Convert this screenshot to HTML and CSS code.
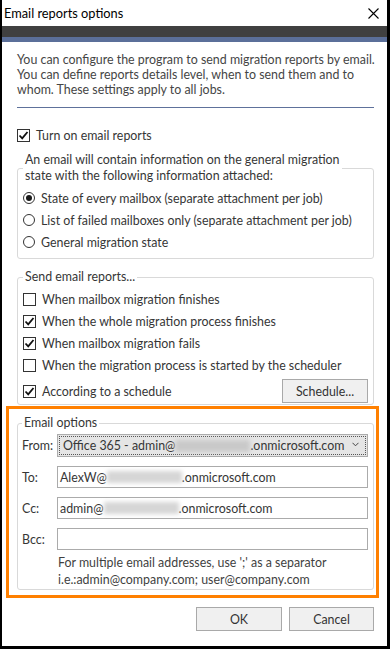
FILE: index.html
```html
<!DOCTYPE html>
<html lang="en">
<head>
    <meta charset="UTF-8" />
    <meta name="viewport" content="width=device-width, initial-scale=1.0"/>
    <title>Email reports options</title>
    <link rel="stylesheet" href="styles.css">
</head>
<body>
    <div class="window">
        <div class="titlebar">
            <span class="title">Email reports options</span>
            <svg class="close-icon" width="11" height="11" viewBox="0 0 11 11">
                <path d="M0.5 0.5 L10.5 10.5 M10.5 0.5 L0.5 10.5" stroke="#000" stroke-width="1.1" fill="none"/>
            </svg>
        </div>
        <div class="menubar"></div>
        <div class="accent"></div>

        <div class="content">
            <p class="intro">You can configure the program to send migration reports by email.<br>You can define reports details level, when to send them and to<br>whom. These settings apply to all jobs.</p>
            <div class="divider"></div>

            <div class="check-row top-check">
                <span class="box checked"><svg width="11" height="11" viewBox="0 0 11 11"><path d="M1.5 5.5 L4.2 8.3 L9.5 2" stroke="#111" stroke-width="1.8" fill="none"/></svg></span>
                Turn on email reports
            </div>

            <!-- Attachment type -->
            <fieldset class="group">
                <legend>An email will contain information on the general migration<br>state with the following information attached:</legend>
                <div class="radio-row"><span class="radio on"></span>State of every mailbox (separate attachment per job)</div>
                <div class="radio-row"><span class="radio"></span>List of failed mailboxes only (separate attachment per job)</div>
                <div class="radio-row"><span class="radio"></span>General migration state</div>
            </fieldset>

            <!-- When to send -->
            <fieldset class="group send-group">
                <legend>Send email reports...</legend>
                <div class="check-row"><span class="box"></span>When mailbox migration finishes</div>
                <div class="check-row"><span class="box checked"><svg width="11" height="11" viewBox="0 0 11 11"><path d="M1.5 5.5 L4.2 8.3 L9.5 2" stroke="#111" stroke-width="1.8" fill="none"/></svg></span>When the whole migration process finishes</div>
                <div class="check-row"><span class="box checked"><svg width="11" height="11" viewBox="0 0 11 11"><path d="M1.5 5.5 L4.2 8.3 L9.5 2" stroke="#111" stroke-width="1.8" fill="none"/></svg></span>When mailbox migration fails</div>
                <div class="check-row"><span class="box"></span>When the migration process is started by the scheduler</div>
                <div class="check-row schedule-row">
                    <span class="box checked"><svg width="11" height="11" viewBox="0 0 11 11"><path d="M1.5 5.5 L4.2 8.3 L9.5 2" stroke="#111" stroke-width="1.8" fill="none"/></svg></span>
                    According to a schedule
                    <button class="btn schedule-btn">Schedule...</button>
                </div>
            </fieldset>

            <!-- Email options (highlighted) -->
            <div class="highlight">
                <fieldset class="group email-group">
                    <legend>Email options</legend>
                    <div class="field">
                        <span class="field-label">From:</span>
                        <div class="select">
                            <div class="select-inner">
                                Office 365 - admin@<span class="redact on-gray"></span>.onmicrosoft.com
                                <svg class="chevron" width="7" height="5" viewBox="0 0 7 5"><path d="M0.5 0.8 L3.5 3.8 L6.5 0.8" stroke="#444" stroke-width="1" fill="none"/></svg>
                            </div>
                        </div>
                    </div>
                    <div class="field">
                        <span class="field-label">To:</span>
                        <div class="input">AlexW@<span class="redact"></span>.onmicrosoft.com</div>
                    </div>
                    <div class="field">
                        <span class="field-label">Cc:</span>
                        <div class="input">admin@<span class="redact"></span>.onmicrosoft.com</div>
                    </div>
                    <div class="field">
                        <span class="field-label">Bcc:</span>
                        <div class="input"></div>
                    </div>
                    <p class="hint">For multiple email addresses, use ';' as a separator<br>i.e.:admin@company.com; user@company.com</p>
                </fieldset>
            </div>

            <div class="actions">
                <button class="btn">OK</button>
                <button class="btn">Cancel</button>
            </div>
        </div>
    </div>
</body>
</html>
```

FILE: styles.css
```css
/* General Reset */
* {
    box-sizing: border-box;
    margin: 0;
    padding: 0;
}

body {
    background-color: #fff;
    font-family: 'Lato', 'Open Sans', sans-serif;
    font-size: 12.4px;
    color: #363636;
}

/* Window frame */
.window {
    width: 390px;
    height: 649px;
    border-left: 2px solid #000;
    border-right: 3px solid #000;
    border-bottom: 3px solid #000;
    background-color: #fff;
}

.titlebar {
    height: 26px;
    display: flex;
    align-items: center;
    justify-content: space-between;
    padding: 0 8px 0 2px;
}

.title {
    color: #000;
    font-size: 12.8px;
}

.close-icon {
    margin-top: 1px;
}

.menubar {
    height: 11px;
    background-color: #404040;
}

.accent {
    height: 5px;
    background-color: #5b6f99;
}

/* Main content */
.content {
    padding: 0 13px 0 15px;
}

.intro {
    margin-top: 10px;
    line-height: 15px;
    color: #454545;
    white-space: nowrap;
}

.divider {
    height: 1px;
    margin-top: 10px;
    background-color: #5e719b;
}

/* Checkbox + radio rows */
.check-row,
.radio-row {
    display: flex;
    align-items: center;
    height: 22px;
    gap: 6px;
    white-space: nowrap;
}

.top-check {
    height: 21px;
    margin-top: 17px;
}

.box {
    width: 13px;
    height: 13px;
    border: 1px solid #333;
    background-color: #fff;
    display: flex;
    align-items: center;
    justify-content: center;
    flex-shrink: 0;
}

.radio {
    width: 12px;
    height: 12px;
    border: 1px solid #333;
    border-radius: 50%;
    display: flex;
    align-items: center;
    justify-content: center;
    flex-shrink: 0;
}

.radio.on::after {
    content: '';
    width: 6px;
    height: 6px;
    border-radius: 50%;
    background-color: #1a1a1a;
}

/* Group boxes */
.group {
    border: 1px solid #d9d9d9;
    border-radius: 3px;
    padding: 3px 5px 5px 5px;
    margin-top: 6px;
}

.group legend {
    padding: 0 2px;
    line-height: 16px;
    white-space: nowrap;
}

.send-group {
    margin-top: 10px;
    padding-bottom: 0;
}

.schedule-row {
    height: 26px;
    margin-top: 2px;
}

.btn {
    font-family: inherit;
    font-size: 12.4px;
    color: #333;
    background-color: #f0f0f0;
    border: 1px solid #a9a9a9;
    height: 24px;
    width: 86px;
}

.schedule-btn {
    margin-left: auto;
}

/* Highlight frame around email options */
.highlight {
    border: 3px solid #ff8000;
    margin: 1px -5px 0 -11px;
    padding: 6px 2px 5px 8px;
}

.email-group {
    margin-top: 0;
    padding: 3px 5px 1px 4px;
}

.field {
    display: flex;
    align-items: center;
    margin-top: 9px;
}

.field:first-of-type {
    margin-top: 0;
}

.field-label {
    width: 35px;
    flex-shrink: 0;
}

.select {
    flex: 1;
    height: 23px;
    border: 1px solid #acacac;
    background-color: #e5e5e5;
    padding: 1px;
}

.select-inner {
    height: 100%;
    border: 1px dotted #555;
    display: flex;
    align-items: center;
    padding-left: 3px;
    white-space: nowrap;
}

.chevron {
    margin-left: auto;
    margin-right: 6px;
    margin-bottom: 3px;
}

.input {
    flex: 1;
    height: 22px;
    border: 1px solid #ababab;
    display: flex;
    align-items: center;
    padding-left: 2px;
    white-space: nowrap;
}

.redact {
    display: inline-block;
    width: 75px;
    height: 12px;
    background-color: #d6d6d6;
    filter: blur(2px);
}

.redact.on-gray {
    background-color: #c9c9c9;
}

.hint {
    margin-top: 4px;
    margin-left: 36px;
    line-height: 17px;
    color: #3f3f3f;
    white-space: nowrap;
}

/* Dialog buttons */
.actions {
    display: flex;
    justify-content: flex-end;
    gap: 7px;
    margin-top: 9px;
}

.actions .btn:last-child {
    width: 85px;
}
```
